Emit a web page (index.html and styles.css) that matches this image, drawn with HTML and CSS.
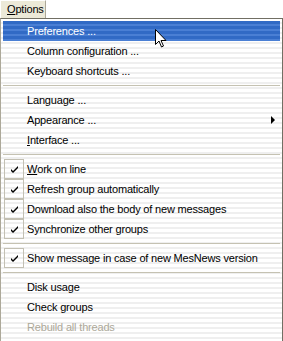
FILE: index.html
```html
<!DOCTYPE html>
<html lang="en">
<head>
    <meta charset="UTF-8">
    <title>Options</title>
    <link rel="stylesheet" href="styles.css">
</head>
<body>
    <div class="menubar">
        <span class="menuBtn"><u>O</u>ptions</span>
    </div>
    <div class="menu">
        <div class="item active">Preferences ...</div>
        <div class="item">Column configuration ...</div>
        <div class="item">Keyboard shortcuts ...</div>
        <div class="sep"></div>
        <div class="item">Language ...</div>
        <div class="item">Appearance ...<span class="arrow"></span></div>
        <div class="item"><u>I</u>nterface ...</div>
        <div class="sep"></div>
        <div class="item"><span class="check"><svg width="9" height="7" viewBox="0 0 9 7"><path d="M1 3v2l2 2 5-5V0L3 5z" fill="#000"/></svg></span><u>W</u>ork on line</div>
        <div class="item"><span class="check"><svg width="9" height="7" viewBox="0 0 9 7"><path d="M1 3v2l2 2 5-5V0L3 5z" fill="#000"/></svg></span>Refresh group automatically</div>
        <div class="item"><span class="check"><svg width="9" height="7" viewBox="0 0 9 7"><path d="M1 3v2l2 2 5-5V0L3 5z" fill="#000"/></svg></span>Download also the body of new messages</div>
        <div class="item"><span class="check"><svg width="9" height="7" viewBox="0 0 9 7"><path d="M1 3v2l2 2 5-5V0L3 5z" fill="#000"/></svg></span>Synchronize other groups</div>
        <div class="sep"></div>
        <div class="item"><span class="check"><svg width="9" height="7" viewBox="0 0 9 7"><path d="M1 3v2l2 2 5-5V0L3 5z" fill="#000"/></svg></span>Show message in case of new MesNews version</div>
        <div class="sep"></div>
        <div class="item">Disk usage</div>
        <div class="item">Check groups</div>
        <div class="item disabled">Rebuild all threads</div>

        <!-- puntero del raton encima del menu -->
        <svg class="cursor" width="12" height="19" viewBox="0 0 12 19">
            <path d="M0.5 0.5v15l3.5-3.5 2.5 6 2-1-2.5-5.5h5z" fill="#fff" stroke="#000" stroke-width="1"/>
        </svg>
    </div>
</body>
</html>
```

FILE: styles.css
```css
/* base */
body{
    margin: 0;
    background: #fff;
    font-family: Tahoma, "Liberation Sans", Arial, sans-serif;
    font-size: 11px;
    letter-spacing: -0.18px;
    color: #000;
}
/* barra de menu */
.menubar{
    height: 18px;
    display: flex;
}
.menuBtn{
    width: 46px;
    height: 18px;
    line-height: 17px;
    padding-left: 6px;
    box-sizing: border-box;
    background: #ece9d8;
    border: 1px solid #fff;
    border-right-color: #aca899;
    border-bottom: none;
}
/* menu desplegable */
.menu{
    position: relative;
    border: 1px solid #716f64;
    border-left-color: #aca899;
    padding: 2px;
    height: 318px;
    width: 277px;
    background: repeating-linear-gradient(to bottom, #fff 0, #fff 3px, #efefef 3px, #efefef 5px);
}
.item{
    height: 20px;
    line-height: 20px;
    padding-left: 24px;
    position: relative;
    display: flex;
    align-items: center;
    white-space: nowrap;
}
.item.active{
    color: #fff;
    background: repeating-linear-gradient(to bottom, #316ac5 0, #316ac5 3px, #4a7fd4 3px, #4a7fd4 5px);
}
.item.disabled{
    color: #aca899;
}
.sep{
    height: 1px;
    background: #c5c2b2;
    margin: 4px 0;
}
/* casilla marcada */
.check{
    position: absolute;
    left: 1px;
    top: 0;
    width: 18px;
    height: 18px;
    border: 1px solid #c3c0b3;
    display: flex;
    align-items: center;
    justify-content: center;
}
/* flecha submenu */
.arrow{
    position: absolute;
    right: 5px;
    top: 6px;
    border-left: 4px solid #000;
    border-top: 4px solid transparent;
    border-bottom: 4px solid transparent;
}
.cursor{
    position: absolute;
    left: 154px;
    top: 10px;
}
```
